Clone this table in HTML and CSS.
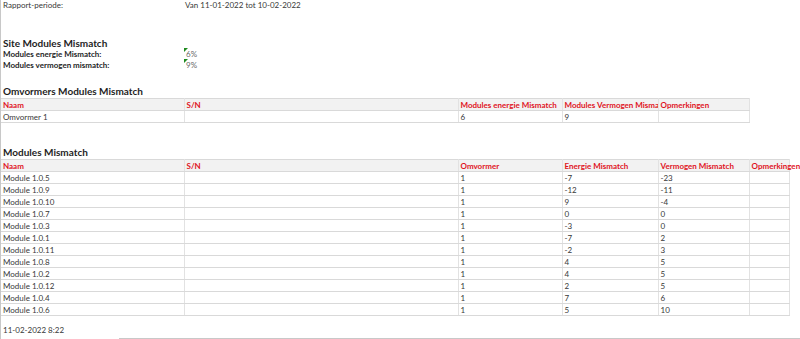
FILE: index.html
```html
<!DOCTYPE html>
<html lang="nl">
<head>
    <meta charset="UTF-8">
    <title>Modules Mismatch rapport</title>
    <link rel="stylesheet" href="styles.css">
</head>
<body>
    <div class="sheet">
        <div class="period">
            <span class="label">Rapport-periode:</span>
            <span class="value">Van 11-01-2022 tot 10-02-2022</span>
        </div>

        <h2 class="section-title site-title">Site Modules Mismatch</h2>
        <div class="kv">
            <span class="kv-label">Modules energie Mismatch:</span>
            <span class="kv-value"><i class="flag"></i>6%</span>
        </div>
        <div class="kv">
            <span class="kv-label">Modules vermogen mismatch:</span>
            <span class="kv-value"><i class="flag"></i>9%</span>
        </div>

        <h2 class="section-title inverters-title">Omvormers Modules Mismatch</h2>
        <table class="grid grid-inverters">
            <colgroup>
                <col class="c-name"><col class="c-sn"><col class="c-w104"><col class="c-w96"><col class="c-w91">
            </colgroup>
            <thead>
                <tr>
                    <th>Naam</th>
                    <th>S/N</th>
                    <th>Modules energie Mismatch</th>
                    <th>Modules Vermogen Mismatch</th>
                    <th>Opmerkingen</th>
                </tr>
            </thead>
            <tbody>
                <tr><td>Omvormer 1</td><td></td><td>6</td><td>9</td><td></td></tr>
            </tbody>
        </table>

        <h2 class="section-title modules-title">Modules Mismatch</h2>
        <table class="grid grid-modules">
            <colgroup>
                <col class="c-name"><col class="c-sn"><col class="c-w104"><col class="c-w96"><col class="c-w91"><col class="c-w40">
            </colgroup>
            <thead>
                <tr>
                    <th>Naam</th>
                    <th>S/N</th>
                    <th>Omvormer</th>
                    <th>Energie Mismatch</th>
                    <th>Vermogen Mismatch</th>
                    <th>Opmerkingen</th>
                </tr>
            </thead>
            <tbody>
                <tr><td>Module 1.0.5</td><td></td><td>1</td><td>-7</td><td>-23</td><td></td></tr>
                <tr><td>Module 1.0.9</td><td></td><td>1</td><td>-12</td><td>-11</td><td></td></tr>
                <tr><td>Module 1.0.10</td><td></td><td>1</td><td>9</td><td>-4</td><td></td></tr>
                <tr><td>Module 1.0.7</td><td></td><td>1</td><td>0</td><td>0</td><td></td></tr>
                <tr><td>Module 1.0.3</td><td></td><td>1</td><td>-3</td><td>0</td><td></td></tr>
                <tr><td>Module 1.0.1</td><td></td><td>1</td><td>-7</td><td>2</td><td></td></tr>
                <tr><td>Module 1.0.11</td><td></td><td>1</td><td>-2</td><td>3</td><td></td></tr>
                <tr><td>Module 1.0.8</td><td></td><td>1</td><td>4</td><td>5</td><td></td></tr>
                <tr><td>Module 1.0.2</td><td></td><td>1</td><td>4</td><td>5</td><td></td></tr>
                <tr><td>Module 1.0.12</td><td></td><td>1</td><td>2</td><td>5</td><td></td></tr>
                <tr><td>Module 1.0.4</td><td></td><td>1</td><td>7</td><td>6</td><td></td></tr>
                <tr><td>Module 1.0.6</td><td></td><td>1</td><td>5</td><td>10</td><td></td></tr>
            </tbody>
        </table>

        <div class="footer">
            <span class="stamp">11-02-2022 8:22</span>
            <span class="rule"></span>
        </div>
    </div>
</body>
</html>
```

FILE: styles.css
```css
* {
    margin: 0;
    padding: 0;
    box-sizing: border-box;
}

body {
    font-family: 'Lato', 'Open Sans', sans-serif;
    font-size: 8px;
    color: #383838;
    background: #ffffff;
}

.sheet {
    width: 800px;
    height: 339px;
    border-left: 1px solid #c8c8c8;
    overflow: hidden;
    display: flex;
    flex-direction: column;
}

.period {
    display: flex;
    height: 11px;
    line-height: 11px;
    padding-left: 2px;
}

.period .label {
    width: 182px;
}

.section-title {
    font-size: 10px;
    font-weight: bold;
    color: #1e1e1e;
    line-height: 12px;
    height: 12px;
    padding-left: 2px;
}

.site-title {
    margin-top: 26px;
}

.inverters-title {
    margin-top: 14px;
}

.modules-title {
    margin-top: 23px;
}

.kv {
    display: flex;
    height: 11px;
    line-height: 11px;
    padding-left: 2px;
}

.kv-label {
    width: 181px;
    font-weight: bold;
    color: #1e1e1e;
}

.kv-value {
    position: relative;
    padding-left: 2px;
    color: #6a6a6a;
}

.flag {
    position: absolute;
    left: 0;
    top: -1px;
    width: 0;
    height: 0;
    border-top: 4px solid #1f8a1f;
    border-right: 4px solid transparent;
}

.grid {
    border-collapse: collapse;
    table-layout: fixed;
    margin-top: 1px;
}

.grid-inverters {
    width: 748px;
}

.grid-modules {
    width: 788px;
}

.c-name { width: 183px; }
.c-sn { width: 274px; }
.c-w104 { width: 104px; }
.c-w96 { width: 96px; }
.c-w91 { width: 91px; }
.c-w40 { width: 40px; }

.grid th,
.grid td {
    height: 12px;
    line-height: 10px;
    padding: 0 2px;
    text-align: left;
    white-space: nowrap;
    overflow: hidden;
    border-bottom: 1px solid #d9d9d9;
    border-right: 1px solid #e2e2e2;
}

.grid th {
    background: #f2f2f2;
    color: #e0141e;
    font-weight: bold;
    border-top: 1px solid #d9d9d9;
    text-overflow: clip;
}

.grid-modules th:last-child {
    overflow: visible;
}

.footer {
    margin-top: auto;
    display: flex;
    align-items: flex-end;
    height: 14px;
}

.stamp {
    width: 118px;
    padding-left: 2px;
    line-height: 11px;
    padding-bottom: 3px;
}

.rule {
    flex: 1;
    border-bottom: 1px solid #c8c8c8;
}
```
